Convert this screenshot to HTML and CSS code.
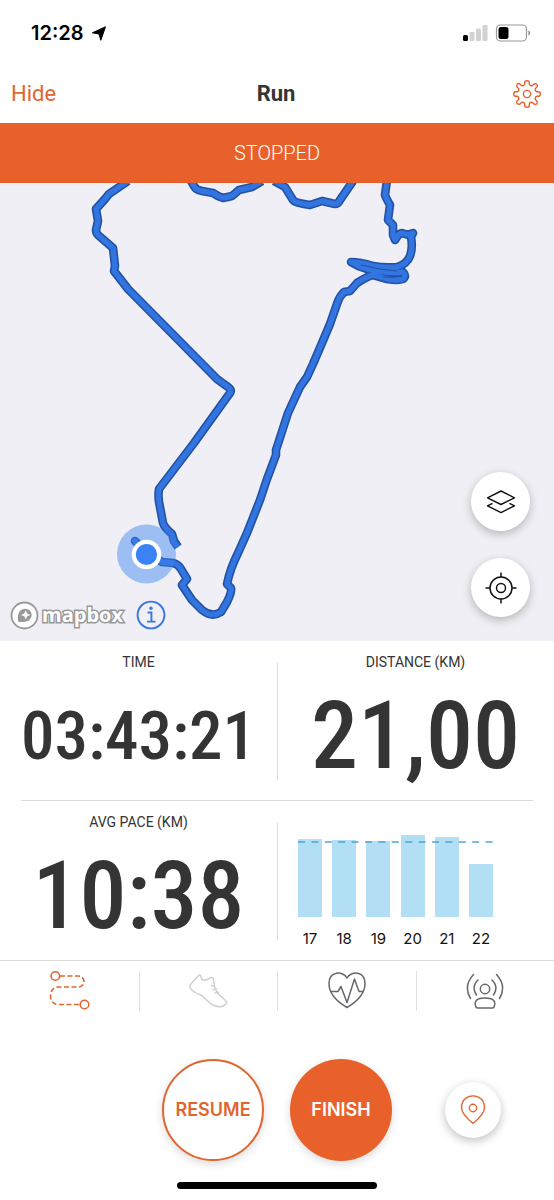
FILE: index.html
```html
<!DOCTYPE html>
<html lang="en">
<head>
<meta charset="utf-8">
<meta name="viewport" content="width=device-width, initial-scale=1">
<title>Run</title>
<link rel="stylesheet" href="styles.css">
</head>
<body>
<div class="app">
  <div class="status">
    <div class="clock">12:28
      <svg width="14" height="15" viewBox="0 0 14 15" aria-hidden="true"><path d="M13.500 .8 8.800 14.300 7 8 .4 6.800Z" fill="#000" stroke="#000" stroke-width="1" stroke-linejoin="round"/></svg>
    </div>
    <svg width="68" height="18" viewBox="0 0 68 18" aria-hidden="true">
      <rect x="0" y="11" width="5" height="6" rx="1.500" fill="#000"/>
      <rect x="6.500" y="8" width="5" height="9" rx="1.200" fill="#d2d2d2"/>
      <rect x="13" y="4.500" width="5" height="12.500" rx="1.200" fill="#d2d2d2"/>
      <rect x="19.500" y="1" width="5" height="16" rx="1.200" fill="#d2d2d2"/>
      <rect x="33.500" y="1" width="30" height="16" rx="4" fill="none" stroke="#999" stroke-width="1.200"/>
      <rect x="35.500" y="3" width="10" height="12" rx="2.500" fill="#000"/>
      <path d="M65.300 6.300q2 .8 2 2.700t-2 2.700Z" fill="#999"/>
    </svg>
  </div>

  <header class="nav">
    <button class="nav-hide" type="button">Hide</button>
    <h1 class="nav-title">Run</h1>
    <button class="nav-settings" type="button" aria-label="Settings">
      <svg width="28" height="28" viewBox="-14 -14 28 28" fill="none" stroke="#e8612c" stroke-width="1.400" stroke-linejoin="round" aria-hidden="true">
        <path d="M-2.300-11.500Q-2.300-13.300 0-13.300T2.300-11.500V-9.800Q2.600-8.600 4-8.300 5.200-7.900 6-8.900L7-9.900Q8.400-10.800 9.700-9.700T9.900-7L8.900-6Q7.900-5.200 8.300-4 8.600-2.600 9.800-2.300H11.500Q13.300-2.300 13.300 0T11.500 2.300H9.800Q8.600 2.600 8.300 4 7.900 5.200 8.900 6L9.900 7Q10.800 8.400 9.700 9.700T7 9.900L6 8.900Q5.200 7.900 4 8.300 2.600 8.600 2.300 9.800V11.500Q2.300 13.300 0 13.300T-2.300 11.500V9.800Q-2.600 8.600-4 8.300-5.200 7.900-6 8.900L-7 9.900Q-8.400 10.800-9.700 9.700T-9.900 7L-8.900 6Q-7.900 5.200-8.300 4-8.600 2.600-9.800 2.300H-11.500Q-13.300 2.300-13.300 0T-11.500-2.300H-9.800Q-8.600-2.600-8.300-4-7.900-5.200-8.900-6L-9.900-7Q-10.800-8.400-9.700-9.700T-7-9.900L-6-8.900Q-5.200-7.900-4-8.300-2.600-8.600-2.300-9.800Z"/>
        <circle r="3.600"/>
      </svg>
    </button>
  </header>

  <div class="banner" role="status">STOPPED</div>

  <main>
    <section class="map" aria-label="Route map">
      <svg class="map-canvas" viewBox="0 183 554 458" aria-hidden="true">
        <defs>
          <g id="route" fill="none" stroke-linejoin="round">
            <path d="M128 181 109 194 105 199 96 209 98 221 96 230Q96 233 98 235L113 248 115 266 114 271 128 289 217 379 228 387Q232 390 230 393L194 443 159 489Q158 494 159 502L163 523Q164 527 172 534L174 541 178 547"/>
            <path d="M191 181 194 186Q196 190 202 191L213 193Q217 196 223 198L232 196 239 190 252 187 262 181"/>
            <path d="M274 181 285 187 293 200Q295 203 310 205L322 201 335 204Q338 204 340 200L353 181"/>
            <path stroke-linecap="round" d="M387 180 385 195Q386 198 390 205L388 220 393 225V235L395 240Q399 233 402 233L408 235 413 233 411 237Q413 248 410 256 407 264 397 267 384 268 373 266 360 262 351 262 359 267 367 269 387 274 403 272Q407 276 403 279 399 281 387 279L373 275Q368 276 357 283L350 291 344 292Q339 297 337 304L330 324 322 343 313 364 307 377 300 387 288 413 276 450 276 455 267 479 260 500 247 533 238 553Q230 569 227 584L231 588Q232 592 227 602L221 612Q212 618 202 610L192 600 182 585 187 579 181 569Q178 564 173 563L162 562 147 553 135 541"/>
          </g>
        </defs>
        <use href="#route" stroke="#2351a3" stroke-width="8.600"/>
        <use href="#route" stroke="#3274e0" stroke-width="5.400"/>
        <path d="M361 265Q380 270 397 271M383 277Q394 278 401 276" fill="none" stroke="#2351a3"/>
        <circle cx="146.500" cy="554" r="29.500" fill="#3b86f0" fill-opacity=".46"/>
        <circle cx="146.500" cy="554.500" r="14.800" fill="#fff"/>
        <circle cx="146.500" cy="554.500" r="10.600" fill="#3c82f7"/>
      </svg>
      <div class="attribution">
        <a class="mapbox" href="#mapbox">
          <svg width="29" height="29" viewBox="0 0 29 29" aria-hidden="true">
            <circle cx="14.500" cy="14.500" r="13" fill="#fff" stroke="#999" stroke-width="1.800"/>
            <path d="M8.300 20.700C6.600 13 9.700 7.800 15.100 7.800c3.700 0 6.500 2.800 6.500 6.200 0 5.100-5.600 8.300-13.300 6.700Z" fill="#999"/>
            <path d="m15.700 9.200 1.400 3.300 3.300 1.400-3.300 1.400-1.400 3.300-1.400-3.300-3.300-1.400 3.300-1.400Z" fill="#fff"/>
          </svg>
          <span class="mapbox-name">mapbox</span>
        </a>
        <button class="info" type="button" aria-label="Map information">
          <svg width="30" height="30" viewBox="0 0 30 30" fill="none" stroke="#3876e3" stroke-width="1.900" aria-hidden="true">
            <circle cx="15" cy="15" r="13.400"/>
            <path d="M11.500 12.500H15.400V21.600M11 21.600H19.500"/><circle cx="15" cy="8.300" r="1.700" fill="#3876e3" stroke="none"/>
          </svg>
        </button>
      </div>
      <div class="map-tools">
        <button class="round-btn" type="button" aria-label="Map layers">
          <svg width="30" height="26" viewBox="0 0 30 26" fill="none" stroke="#111" stroke-width="1.400" stroke-linejoin="round" aria-hidden="true">
            <path d="M15 2 28.500 8.800 15 15.500 1.500 8.800Z"/><path d="M6.500 14.300 1.500 16.800 15 23.600 28.500 16.800 23.500 14.300"/>
          </svg>
        </button>
        <button class="round-btn" type="button" aria-label="Centre on my location">
          <svg width="32" height="32" viewBox="0 0 32 32" fill="none" stroke="#111" stroke-width="1.500" aria-hidden="true">
            <circle cx="16" cy="16" r="11"/><circle cx="16" cy="16" r="4.500"/>
            <path d="M16 .5V5M16 27v4.500M.5 16H5M27 16h4.500"/>
          </svg>
        </button>
      </div>
    </section>

    <section class="stats" aria-label="Workout statistics">
      <div class="stats-row">
        <div class="stat"><h2 class="stat-label">TIME</h2><p class="stat-value stat-value-long">03:43:21</p></div>
        <div class="stat"><h2 class="stat-label">DISTANCE (KM)</h2><p class="stat-value">21,00</p></div>
      </div>
      <hr class="rule">
      <div class="stats-row">
        <div class="stat"><h2 class="stat-label">AVG PACE (KM)</h2><p class="stat-value">10:38</p></div>
        <div class="stat chart-cell">
          <div class="chart">
            <svg class="average" width="100%" height="2" aria-hidden="true"><line x1="0" y1="1" x2="100%" y2="1" stroke="#4da6d6" stroke-width="1.400" stroke-dasharray="7 6.400"/></svg>
            <div class="split"><span class="bar" style="height:78px"></span><span>17</span></div>
            <div class="split"><span class="bar" style="height:77px"></span><span>18</span></div>
            <div class="split"><span class="bar" style="height:76px"></span><span>19</span></div>
            <div class="split"><span class="bar" style="height:82px"></span><span>20</span></div>
            <div class="split"><span class="bar" style="height:80px"></span><span>21</span></div>
            <div class="split"><span class="bar" style="height:53px"></span><span>22</span></div>
          </div>
        </div>
      </div>
    </section>
  </main>

  <nav class="tabs" aria-label="Workout views">
    <button class="tab" type="button" aria-label="Route">
      <svg width="42" height="42" viewBox="0 0 42 42" fill="none" stroke="#e0652f" stroke-width="1.600" aria-hidden="true">
        <circle cx="7.300" cy="6" r="4.300"/><circle cx="36.500" cy="34.500" r="4.300"/>
        <path stroke-dasharray="5 2.500" d="M12 6H30C38 6 38 17 30 17H10C0 17 0 34.500 10 34.500H32"/>
      </svg>
    </button>
    <button class="tab" type="button" aria-label="Shoes">
      <svg width="42" height="42" viewBox="0 0 42 42" fill="none" stroke="#cfcfd1" stroke-width="1.500" stroke-linejoin="round" stroke-linecap="round" aria-hidden="true">
        <path d="M12.500 5Q13.800 4.800 14 7 14.500 10.500 17.500 10.200C20 10 22 8.500 24 7.500Q26 7 26.300 9C27 16 28.500 21 31.500 24L38.500 30.500Q40.500 32 39 34C36 37.500 31 37 27 35.500 21 33 18 27 13 24.500 8 23 5 21.500 3 17.500Q2 16 3.500 14.500L11 6ZM24.500 15.500 27.500 16M26 19.500 29.500 19M28 23 31.500 22.500"/>
      </svg>
    </button>
    <button class="tab" type="button" aria-label="Heart rate">
      <svg width="42" height="42" viewBox="0 0 42 42" fill="none" stroke="#66676b" stroke-width="1.500" stroke-linejoin="round" aria-hidden="true">
        <path d="M21 37.500C10 31 3 23 3 13.500 3 1 17 .5 21 8 25 .5 39 1 39 13.500 39 23 32 31 21 37.500Z"/>
        <path d="M4.500 21.500H12L15 16.500 21 32.500 28.500 9 33 21.500H37.500"/>
      </svg>
    </button>
    <button class="tab" type="button" aria-label="Live audience">
      <svg width="42" height="42" viewBox="0 0 42 42" fill="none" stroke="#66676b" stroke-width="1.500" stroke-linecap="round" aria-hidden="true">
        <circle cx="21" cy="19" r="4.700"/>
        <path d="M13.500 38Q12 38 11.600 36C10 31 13 28 21 28S32 31 30.400 36Q30 38 28.500 38ZM14 10Q7 17 12.500 25M28 10Q35 17 29.500 25M9.500 4.500Q-1 16 6.500 28.500M32.500 4.500Q43 16 35.500 28.500"/>
      </svg>
    </button>
  </nav>

  <footer class="actions">
    <button class="action action-outline" type="button">RESUME</button>
    <button class="action action-solid" type="button">FINISH</button>
    <button class="round-btn pin" type="button" aria-label="Drop a pin">
      <svg width="26" height="30" viewBox="0 0 26 30" fill="none" stroke="#e0652f" stroke-width="1.400" stroke-linejoin="round" aria-hidden="true">
        <path d="M13 28.500Q1.500 19 1.500 12.500C1.500-3 24.500-3 24.500 12.500Q24.500 19 13 28.500Z"/><circle cx="13" cy="13" r="3.700"/>
      </svg>
    </button>
  </footer>
  <div class="home-bar"></div>
</div>
</body>
</html>
```
FILE: styles.css
```css
* { box-sizing: border-box; }

body {
  margin: 0;
  background: #fff;
  color: #343434;
  font-family: Roboto, "Liberation Sans", sans-serif;
}

button {
  padding: 0;
  border: 0;
  background: none;
  color: inherit;
  font: inherit;
  cursor: pointer;
}

svg { display: block; }

h1, h2, p { margin: 0; }

.app {
  display: flex;
  flex-direction: column;
  min-height: 100vh;
}

.status {
  display: flex;
  justify-content: space-between;
  align-items: center;
  height: 64px;
  padding: 2px 23px 0 31px;
}

.clock {
  display: flex;
  align-items: center;
  gap: 8px;
  color: #000;
  font: 600 20px/24px Inter, sans-serif;
}

.nav {
  display: grid;
  grid-template-columns: 1fr auto 1fr;
  align-items: center;
  height: 59px;
  padding: 0 13px 0 11px;
}

.nav-hide {
  justify-self: start;
  color: #e0652f;
  font-size: 22px;
  line-height: 28px;
}

.nav-title {
  font-size: 22px;
  font-weight: 700;
  line-height: 28px;
}

.nav-settings { justify-self: end; }

.banner {
  padding: 16px;
  background: #e8612a;
  color: #fff;
  font-size: 20px;
  font-weight: 300;
  line-height: 28px;
  text-align: center;
}

.map {
  position: relative;
  overflow: hidden;
  background: #efeff5;
}

.map-canvas {
  width: 100%;
  height: auto;
}

.attribution {
  position: absolute;
  left: 10px;
  bottom: 11px;
  display: flex;
  align-items: center;
  gap: 13px;
}

.mapbox {
  display: flex;
  align-items: center;
  gap: 3px;
  text-decoration: none;
}

.mapbox-name {
  color: #fff;
  font: 700 20px/28px "Open Sans", sans-serif;
  -webkit-text-stroke: 3px #999;
  paint-order: stroke fill;
}

.map-tools {
  position: absolute;
  right: 24px;
  bottom: 24px;
  display: flex;
  flex-direction: column;
  gap: 27px;
}

.round-btn {
  display: flex;
  align-items: center;
  justify-content: center;
  width: 59px;
  height: 59px;
  border-radius: 50%;
  background: #fff;
  box-shadow: 0 3px 10px rgba(0, 0, 0, .25);
}

.stats-row {
  position: relative;
  display: grid;
  grid-template-columns: 1fr 1fr;
  min-height: 159px;
}

.stats-row::after {
  content: "";
  position: absolute;
  top: 22px;
  bottom: 20px;
  left: 50%;
  width: 1px;
  background: #dcdcdf;
}

.stat {
  display: flex;
  flex-direction: column;
  align-items: center;
  padding-top: 12px;
}

.stat-label {
  font-size: 14px;
  font-weight: 400;
  line-height: 18px;
}

.stat-value {
  margin: auto;
  font: 500 94px/112px "Roboto Condensed", Roboto, sans-serif;
}

.stat-value-long { font-size: 67px; }

.rule {
  height: 1px;
  margin: 0 21px;
  border: 0;
  background: #dcdcdf;
}

.chart-cell { justify-content: end; padding: 0 61px 11px 21px; }

.chart {
  position: relative;
  display: flex;
  align-items: end;
  justify-content: space-between;
  width: 100%;
}

.split {
  display: flex;
  flex-direction: column;
  align-items: center;
  gap: 12px;
  width: 24px;
  color: #111;
  font: 400 15px/20px Inter, sans-serif;
}

.bar {
  width: 100%;
  background: #b2dff4;
}

.average {
  position: absolute;
  left: 0;
  bottom: 106px;
}

.tabs {
  display: grid;
  grid-template-columns: repeat(4, 1fr);
  border-top: 1px solid #dcdcdf;
  padding: 10px 0;
}

.tab {
  display: flex;
  align-items: center;
  justify-content: center;
  height: 40px;
}

.tab + .tab { border-left: 1px solid #e0e0e3; }

.actions {
  display: grid;
  grid-template-columns: 1fr auto auto 1fr;
  align-items: center;
  padding: 38px 0 21px;
}

.action {
  width: 102px;
  height: 102px;
  border-radius: 50%;
  box-shadow: 0 3px 8px rgba(0, 0, 0, .15);
  font: 600 18px/24px Inter, sans-serif;
}

.action-outline {
  grid-column: 2;
  margin-right: 26px;
  border: 2px solid #e0652f;
  background: #fff;
  color: #e0652f;
}

.action-solid {
  background: #e8612a;
  color: #fff;
}

.pin {
  justify-self: center;
  width: 56px;
  height: 56px;
}

.home-bar {
  align-self: center;
  width: 36%;
  height: 7px;
  border-radius: 4px;
  background: #000;
}
```
